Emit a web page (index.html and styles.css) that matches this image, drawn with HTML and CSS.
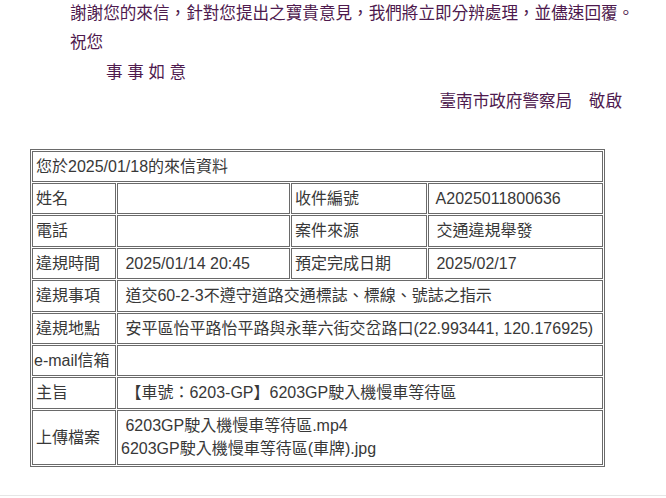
FILE: index.html
```html
<!DOCTYPE html>
<html lang="zh-Hant">
<head>
<meta charset="utf-8">
<title>來信資料</title>
<link rel="stylesheet" href="styles.css">
</head>
<body>
<div class="letter">
  <div class="line">謝謝您的來信，針對您提出之寶貴意見，我們將立即分辨處理，並儘速回覆。</div>
  <div class="line">祝您</div>
  <div class="line wish">事 事 如 意</div>
  <div class="line sign">臺南市政府警察局　敬啟</div>
</div>
<table class="info">
  <colgroup>
    <col class="c1"><col class="c2"><col class="c3"><col class="c4">
  </colgroup>
  <tr><td colspan="4">您於2025/01/18的來信資料</td></tr>
  <tr><td>姓名</td><td></td><td>收件編號</td><td class="sp">A2025011800636</td></tr>
  <tr><td>電話</td><td></td><td>案件來源</td><td class="sp">交通違規舉發</td></tr>
  <tr><td>違規時間</td><td class="sp">2025/01/14 20:45</td><td>預定完成日期</td><td class="sp">2025/02/17</td></tr>
  <tr><td>違規事項</td><td colspan="3" class="sp">道交60-2-3不遵守道路交通標誌、標線、號誌之指示</td></tr>
  <tr><td>違規地點</td><td colspan="3" class="sp">安平區怡平路怡平路與永華六街交岔路口(22.993441, 120.176925)</td></tr>
  <tr><td class="tight">e-mail信箱</td><td colspan="3"></td></tr>
  <tr><td>主旨</td><td colspan="3" class="sp">【車號：6203-GP】6203GP駛入機慢車等待區</td></tr>
  <tr><td>上傳檔案</td><td colspan="3"><div class="sp">6203GP駛入機慢車等待區.mp4</div><div>6203GP駛入機慢車等待區(車牌).jpg</div></td></tr>
</table>
<div class="footer"></div>
</body>
</html>
```
FILE: styles.css
```css
html, body {
  margin: 0;
  padding: 0;
  background: #ffffff;
}
body {
  font-family: "Liberation Sans", "Noto Sans CJK TC", sans-serif;
  width: 666px;
  height: 498px;
  overflow: hidden;
}
.letter {
  color: #4e1a4e;
  font-size: 16.6px;
  padding-left: 70px;
  margin-top: -1px;
}
.line {
  line-height: 29.4px;
  white-space: nowrap;
}
.wish {
  padding-left: 36px;
}
.sign {
  text-align: right;
  padding-right: 44px;
}
.info {
  margin: 32px 0 0 30px;
  border: 1px solid #6a6a6a;
  border-spacing: 1px;
  table-layout: fixed;
  width: 574px;
  color: #383838;
  font-size: 16px;
}
.c1 { width: 84px; }
.c2 { width: 173px; }
.c3 { width: 136px; }
.c4 { width: 175px; }
.info td {
  border: 1px solid #6a6a6a;
  padding: 3px 3px;
  line-height: 23.4px;
  height: 23.4px;
  vertical-align: middle;
  white-space: nowrap;
}
.info td.tight {
  padding-left: 1px;
  padding-right: 0;
}
.sp::before {
  content: " ";
  white-space: pre;
}
.footer {
  margin-top: 28px;
  border-top: 1px solid #e6e6e6;
}
```
